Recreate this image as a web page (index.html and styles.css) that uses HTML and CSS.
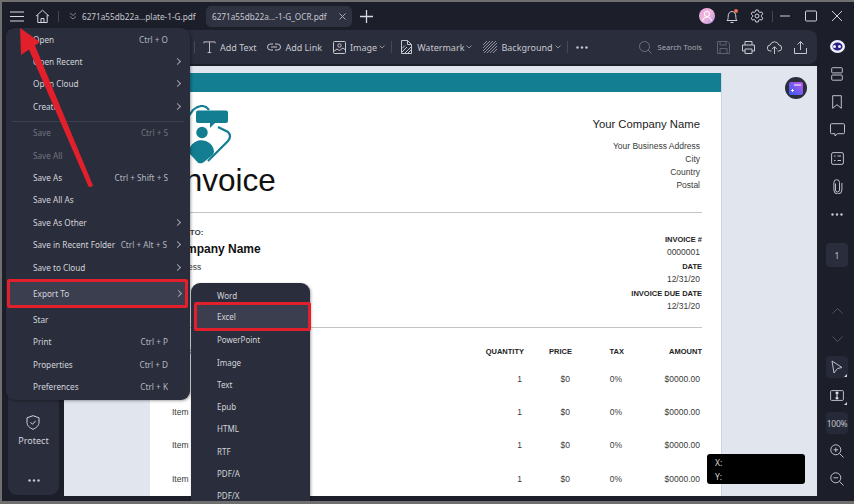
FILE: index.html
```html
<!DOCTYPE html>
<html lang="en">
<head>
<meta charset="utf-8">
<title>Invoice</title>
<link rel="stylesheet" href="styles.css">
</head>
<body>
<div class="window">
  <header class="titlebar">
    <button class="tb-icon burger"><svg width="14" height="11" viewBox="0 0 14 11"><path d="M0 1h14M0 5.500h14M0 10h14"/></svg></button>
    <button class="tb-icon home"><svg width="15" height="15" viewBox="0 0 15 15"><path d="M1 7.200 7.500 1.200 14 7.200M2.800 6v7.500h9.400V6M6 13.500V9.500h3v4"/></svg></button>
    <span class="tb-sep"></span>
    <svg class="tab-chev" width="8" height="8" viewBox="0 0 8 8"><path d="M1 1l3 2.500L7 1M1 4.500 4 7l3-2.500"/></svg>
    <span class="tab">6271a55db22a...plate-1-G.pdf</span>
    <span class="tab active">6271a55db22a...-1-G_OCR.pdf<svg width="7" height="7" viewBox="0 0 7 7"><path d="M.5.500l6 6M6.500.500l-6 6"/></svg></span>
    <svg class="tab-plus" width="13" height="13" viewBox="0 0 13 13"><path d="M6.500 0v13M0 6.500h13"/></svg>
    <div class="tb-right">
      <span class="avatar"><svg width="16" height="16" viewBox="0 0 16 16"><circle cx="8" cy="6" r="2.600"/><path d="M3.500 13c.5-3 2.300-4 4.500-4s4 1 4.500 4"/></svg></span>
      <span class="bell"><svg width="14" height="15" viewBox="0 0 14 15"><path d="M2 11.500c1-1 1.200-2 1.200-4.500C3.200 4.500 4.800 2.500 7 2.500s3.800 2 3.800 4.500c0 2.500.2 3.500 1.200 4.500zM5.500 13.500h3"/></svg><i></i></span>
      <svg class="gear" width="14" height="14" viewBox="0 0 14 14"><path d="M5.800 1h2.400l.4 1.700 1.300.7 1.700-.5 1.200 2-1.300 1.300v1.600l1.300 1.300-1.200 2-1.700-.5-1.300.7L8.200 13H5.800l-.4-1.700-1.300-.7-1.700.5-1.200-2 1.300-1.300V6.200L1.200 4.900l1.200-2 1.700.5 1.300-.7z"/><circle cx="7" cy="7" r="2"/></svg>
      <span class="tb-sep"></span>
      <svg class="win" width="12" height="12" viewBox="0 0 12 12"><path d="M1 6h10"/></svg>
      <svg class="win" width="12" height="12" viewBox="0 0 12 12"><rect x=".5" y="1" width="11" height="10" rx="1"/></svg>
      <svg class="win" width="12" height="12" viewBox="0 0 12 12"><path d="M1 1l10 10M11 1 1 11"/></svg>
    </div>
  </header>

  <div class="main">
    <div class="toolbar">
      <span class="t-sep"></span>
      <span class="tool"><svg width="13" height="14" viewBox="0 0 14 14"><path d="M1 3V1.500h12V3M7 1.500V13M5 13h4"/></svg>Add Text</span>
      <span class="tool"><svg width="14" height="14" viewBox="0 0 14 14"><path d="M6 4H3.500a3 3 0 0 0 0 6H6M8 4h2.500a3 3 0 0 1 0 6H8M4 7h6"/></svg>Add Link</span>
      <span class="tool"><svg width="13" height="13" viewBox="0 0 13 13"><rect x=".5" y=".5" width="12" height="12" rx="1"/><circle cx="6.500" cy="4.500" r="1.700"/><path d="M.5 10.500 4 8l2.500 1.500L10 7l2.500 2"/></svg>Image<svg class="chev" width="6" height="4" viewBox="0 0 6 4"><path d="M.5.500 3 3 5.500.500"/></svg></span>
      <span class="t-sep"></span>
      <span class="tool"><svg width="13" height="14" viewBox="0 0 13 14"><path d="M1.500.5h6l4 4v9h-10zM7.500.5v4h4M2 12 7 7M5 13l6-6M2 8.500 5 5.500M8 13l3-3"/></svg>Watermark<svg class="chev" width="6" height="4" viewBox="0 0 6 4"><path d="M.5.500 3 3 5.500.500"/></svg></span>
      <span class="tool"><svg class="hatch" width="14" height="12" viewBox="0 0 14 12"><path d="M0 4 4 0M0 7l7-7M0 10 10 0M1 12 13 0M4 12l10-10M7 12l7-7M10 12l4-4"/></svg>Background<svg class="chev" width="6" height="4" viewBox="0 0 6 4"><path d="M.5.500 3 3 5.500.500"/></svg></span>
      <span class="t-sep"></span>
      <svg class="dots" width="12" height="3" viewBox="0 0 12 3"><circle cx="1.500" cy="1.500" r="1.200"/><circle cx="6" cy="1.500" r="1.200"/><circle cx="10.500" cy="1.500" r="1.200"/></svg>
      <div class="t-right">
        <span class="search"><svg width="13" height="13" viewBox="0 0 13 13"><circle cx="5.500" cy="5.500" r="5"/><path d="M9 9l3.500 3.500"/></svg>Search Tools</span>
        <svg class="dim" width="13" height="13" viewBox="0 0 13 13"><path d="M.5.500h10l2 2v10H.5zM3 .5v3.500h6V.5M3 12.500V7.500h7v5"/></svg>
        <svg width="13" height="13" viewBox="0 0 13 13"><path d="M3 4V.5h7V4M3 10H.5V4h12v6H10M3 8h7v4.500H3z"/></svg>
        <svg width="15" height="13" viewBox="0 0 15 13"><path d="M4.500 10H3.500a3 3 0 0 1-.3-6 4.500 4.500 0 0 1 8.600 0 3 3 0 0 1-.3 6h-1M7.500 13V6M5 8.200 7.500 5.700 10 8.200"/></svg>
        <svg width="13" height="13" viewBox="0 0 13 13"><path d="M.5 7v5.500h12V7M6.500 9V.8M3.500 3.500l3-3 3 3"/></svg>
      </div>
    </div>

    <aside class="sidebar">
      <div class="side-item">
        <svg width="14" height="15" viewBox="0 0 14 15"><path d="M7 .7 13 2.800v4.500c0 3.400-2.700 5.600-6 7-3.300-1.400-6-3.600-6-7V2.800zM4.500 7.300l2 2 3.200-3.500"/></svg>
        <span>Protect</span>
      </div>
      <svg class="dots side-dots" width="12" height="3" viewBox="0 0 12 3"><circle cx="1.500" cy="1.500" r="1.200"/><circle cx="6" cy="1.500" r="1.200"/><circle cx="10.500" cy="1.500" r="1.200"/></svg>
    </aside>

    <section class="canvas">
      <article class="page">
        <div class="band"></div>
        <div class="head-row">
          <div class="brand">
            <svg class="logo" width="60" height="60" viewBox="0 0 60 60"><path class="logo-line" d="M2 30 20 5Q30-3 36 5M45 22l10 5q4 4 0 9L35 56"/><rect class="logo-fill" x="23" y="5.500" width="32" height="12.500" rx="2"/><path class="logo-fill" d="M37 18h5l-5 5z"/><circle class="logo-fill" cx="29" cy="27.500" r="5.700"/><path class="logo-fill" d="M16 48a12.500 12 0 0 1 25-1.500q0 2-2 4L30 57.800q-3 1-5 0z"/></svg>
            <div class="invoice-title">Invoice</div>
          </div>
          <div class="company">
            <div class="company-name">Your Company Name</div>
            <div class="line">Your Business Address</div>
            <div class="line">City</div>
            <div class="line">Country</div>
            <div class="line">Postal</div>
          </div>
        </div>
        <div class="bill-row">
          <div class="bill-to">
            <div class="bill-label">BILL TO:</div>
            <div class="bill-name">Company Name</div>
            <div class="bill-addr">Address</div>
          </div>
          <div class="meta">
            <div class="meta-k">INVOICE #</div>
            <div class="meta-v">0000001</div>
            <div class="meta-k">DATE</div>
            <div class="meta-v">12/31/20</div>
            <div class="meta-k">INVOICE DUE DATE</div>
            <div class="meta-v">12/31/20</div>
          </div>
        </div>
        <div class="items">
          <div class="th th-first">DESCRIPTION</div><div class="th">QUANTITY</div><div class="th">PRICE</div><div class="th">TAX</div><div class="th">AMOUNT</div>
          <div class="td-item">Item</div><div class="td">1</div><div class="td">$0</div><div class="td">0%</div><div class="td">$0000.00</div>
          <div class="td-item">Item</div><div class="td">1</div><div class="td">$0</div><div class="td">0%</div><div class="td">$0000.00</div>
          <div class="td-item">Item</div><div class="td">1</div><div class="td">$0</div><div class="td">0%</div><div class="td">$0000.00</div>
          <div class="td-item">Item</div><div class="td">1</div><div class="td">$0</div><div class="td">0%</div><div class="td">$0000.00</div>
        </div>
      </article>
      <span class="float-btn"><svg width="14" height="13" viewBox="0 0 14 13"><defs><linearGradient id="fg" x1="1" y1="0" x2="0" y2="1"><stop offset="0" stop-color="#c257e8"/><stop offset="1" stop-color="#2f5cf5"/></linearGradient></defs><rect width="14" height="13" rx="2" fill="url(#fg)"/><path d="M5 3h7" stroke="#f3e8ff" stroke-width="1.200"/><path d="M2 8.500h3M3.500 7v3" stroke="#fff" stroke-width=".9"/></svg></span>
      <div class="coords"><span>X:</span><span>Y:</span></div>
    </section>

    <nav class="rail">
      <span class="r-item"><span class="ai"><i></i><i></i></span></span>
      <span class="r-item"><svg width="12" height="14" viewBox="0 0 12 14"><rect x=".7" y=".7" width="10.600" height="5.200" rx=".8"/><rect x=".7" y="8" width="10.600" height="5.200" rx=".8"/></svg></span>
      <span class="r-item"><svg width="10" height="14" viewBox="0 0 10 14"><path d="M.7.700h8.600v12.600L5 9.700.7 13.300z"/></svg></span>
      <span class="r-item"><svg width="15" height="14" viewBox="0 0 15 14"><path d="M1.500.7h12a1 1 0 0 1 1 1v8a1 1 0 0 1-1 1H7.500L5 13v-2.300H1.500a1 1 0 0 1-1-1v-8a1 1 0 0 1 1-1z"/></svg></span>
      <span class="r-item"><svg width="13" height="13" viewBox="0 0 13 13"><rect x=".6" y=".6" width="11.800" height="11.800" rx="1.500"/><path d="M3 4h1.500M6.500 4H10M3 8.500h1.500M6.500 8.500H10"/></svg></span>
      <span class="r-item"><svg width="11" height="15" viewBox="0 0 11 15"><path d="M3.500 4.500v6.500a2 2 0 0 0 4 0V3.500a2.800 2.800 0 0 0-5.600 0V11a4 4 0 0 0 8 0V4"/></svg></span>
      <span class="r-item"><svg class="dots" width="12" height="3" viewBox="0 0 12 3"><circle cx="1.500" cy="1.500" r="1.200"/><circle cx="6" cy="1.500" r="1.200"/><circle cx="10.500" cy="1.500" r="1.200"/></svg></span>
      <span class="r-page">1</span>
      <span class="r-item r-first dim"><svg width="11" height="6" viewBox="0 0 11 6"><path d="M.5 5.500 5.500.5l5 5"/></svg></span>
      <span class="r-item dim"><svg width="11" height="6" viewBox="0 0 11 6"><path d="M.5.500l5 5 5-5"/></svg></span>
      <span class="r-item boxed"><svg width="12" height="14" viewBox="0 0 12 14"><path d="M1 1 11 7.500 6.500 8.500 3 13z"/></svg><i class="corner"></i></span>
      <span class="r-item"><svg width="14" height="11" viewBox="0 0 14 11"><rect x=".6" y=".6" width="12.800" height="9.800" rx="1"/><path class="thick" d="M7 2v7M5.500 3.300 7 2l1.500 1.300M5.500 7.700 7 9l1.500-1.300"/></svg><i class="corner"></i></span>
      <span class="r-item boxed pct">100%</span>
      <span class="r-item"><svg width="14" height="14" viewBox="0 0 14 14"><circle cx="5.800" cy="5.800" r="5"/><path d="M9.500 9.500l4 4M3.500 5.800h4.600M5.800 3.500v4.600"/></svg></span>
      <span class="r-item"><svg width="14" height="14" viewBox="0 0 14 14"><circle cx="5.800" cy="5.800" r="5"/><path d="M9.500 9.500l4 4M3.500 5.800h4.600"/></svg></span>
    </nav>
  </div>

  <div class="menu">
    <div class="m-item"><span>Open</span><em>Ctrl + O</em></div>
    <div class="m-item"><span>Open Recent</span><b></b></div>
    <div class="m-item"><span>Open Cloud</span><b></b></div>
    <div class="m-item"><span>Create</span><b></b></div>
    <hr class="m-div">
    <div class="m-item off"><span>Save</span><em>Ctrl + S</em></div>
    <div class="m-item off"><span>Save All</span></div>
    <div class="m-item"><span>Save As</span><em>Ctrl + Shift + S</em></div>
    <div class="m-item"><span>Save All As</span></div>
    <div class="m-item"><span>Save As Other</span><b></b></div>
    <div class="m-item"><span>Save in Recent Folder</span><em>Ctrl + Alt + S</em><b></b></div>
    <div class="m-item"><span>Save to Cloud</span><b></b></div>
    <div class="m-item export"><span>Export To</span><b></b></div>
    <div class="m-item"><span>Star</span></div>
    <div class="m-item"><span>Print</span><em>Ctrl + P</em></div>
    <div class="m-item"><span>Properties</span><em>Ctrl + D</em></div>
    <div class="m-item"><span>Preferences</span><em>Ctrl + K</em></div>
  </div>

  <div class="submenu">
    <div class="s-item">Word</div>
    <div class="s-item excel">Excel</div>
    <div class="s-item">PowerPoint</div>
    <div class="s-item">Image</div>
    <div class="s-item">Text</div>
    <div class="s-item">Epub</div>
    <div class="s-item">HTML</div>
    <div class="s-item">RTF</div>
    <div class="s-item">PDF/A</div>
    <div class="s-item">PDF/X</div>
  </div>

  <svg class="arrow" width="100" height="195" viewBox="0 0 100 195"><path d="M20 28 21 55 29 49.500 88.500 186.500Q91 188 93 185.500L35 45.500 40 42z"/></svg>
</div>
</body>
</html>
```
FILE: styles.css
```css
* { box-sizing: border-box; }
html, body { margin: 0; padding: 0; }
body { width: 854px; height: 504px; overflow: hidden; font-family: "Noto Sans", sans-serif; }
svg { display: block; flex: none; fill: none; stroke: currentColor; stroke-width: 1; }
i, em, b { font-style: normal; font-weight: normal; }

.window { position: relative; width: 854px; height: 504px; overflow: hidden; display: flex; flex-direction: column; background: #1c1e2a; border: solid #6f6f6f; border-width: 2px 0 3px 2px; color: #d3d5dc; }

/* title bar */
.titlebar { height: 28px; flex: none; display: flex; align-items: center; font-size: 8.200px; color: #c6c8d0; }
.tb-icon { padding: 0; border: 0; background: none; color: #d7d9e0; display: flex; }
.burger { margin-left: 8px; margin-top: 1px; }
.home { margin-left: 11px; margin-top: 1px; }
.tb-sep { width: 1px; height: 11px; background: #43465a; }
.titlebar > .tb-sep { margin-left: 8px; }
.tab-chev { margin-left: 10px; color: #7d8090; }
.tab { margin-left: 5px; width: 124px; white-space: nowrap; }
.tab.active { margin-left: 0; width: 146px; height: 21px; padding: 0 6px; background: #2f3240; border-radius: 5px; display: flex; align-items: center; justify-content: space-between; }
.tab.active svg { color: #a9abb5; }
.tab-plus { margin-left: 8px; color: #d7d9e0; stroke-width: 1.300; }
.tb-right { margin-left: auto; padding-right: 11px; display: flex; align-items: center; }
.avatar { width: 16px; height: 16px; border-radius: 50%; background: linear-gradient(135deg, #e9a1e4, #f1b7d9 50%, #b58ff0); color: #fff; }
.bell { position: relative; margin-left: 10px; color: #d0d2d9; }
.bell i { position: absolute; top: 0; right: 1px; width: 4px; height: 4px; border-radius: 50%; background: #f26a55; }
.gear { margin-left: 11px; color: #d0d2d9; }
.tb-right .tb-sep { margin-left: 8px; }
.win { margin-left: 14px; color: #cfd1d8; }
.tb-right .tb-sep + .win { margin-left: 6px; }

/* main grid */
.main { flex: 1; min-height: 0; display: grid; grid-template-columns: 62px 753px 37px; grid-template-rows: 34px 430px; row-gap: 2px; }
.toolbar { grid-column: 1 / 3; grid-row: 1; margin-left: 6px; padding: 0 10px 0 191px; background: #2a2d3b; border-radius: 0 8px 8px 0; display: flex; align-items: center; gap: 11px; font-size: 9px; color: #c6c8d0; white-space: nowrap; }
.tool { display: flex; align-items: center; gap: 4px; }
.chev { margin-left: -2px; color: #8b8d99; }
.t-sep { width: 1px; height: 12px; background: #454859; margin: 0 -3px 0 -5px; }
.dots { fill: currentColor; stroke: none; color: #c6c8d0; }
.hatch { stroke-width: .8; color: #a9abb5; }
.t-right { margin-left: auto; display: flex; align-items: center; gap: 12px; }
.search { display: flex; align-items: center; gap: 6px; margin-right: 3px; font-size: 7.600px; color: #a9abb5; }
.search svg { color: #6d7080; }
.dim { color: #5d6070; }

.sidebar { grid-column: 1; grid-row: 2; margin: 0 5px 1px 6px; background: #2a2d3b; border-radius: 0 0 9px 9px; display: flex; flex-direction: column; align-items: center; justify-content: flex-end; padding-bottom: 13px; color: #d3d5dc; font-size: 9px; }
.side-item { display: flex; flex-direction: column; align-items: center; gap: 4px; }
.side-dots { margin-top: 32px; }

/* document */
.canvas { grid-column: 2; grid-row: 2; position: relative; overflow: hidden; background: #e1e5ee; padding: 7px 0 0 86px; }
.page { width: 572px; height: 600px; background: #fff; border-right: 1px solid #ccd6de; padding: 0 19px 0 20px; font-family: "Liberation Sans", Arial, sans-serif; color: #3a3a3a; position: relative; }
.band { height: 19px; margin: 0 -19px 0 -20px; background: #137d92; }
.head-row { height: 121px; display: flex; justify-content: space-between; border-bottom: 1px solid #c4c4c4; }
.brand { padding-top: 13px; }
.logo { margin-left: 3px; }
.logo-line { stroke: #137d92; stroke-width: 2.200; }
.logo-fill { fill: #137d92; stroke: none; }
.invoice-title { margin-top: -3px; padding-left: 6px; font-size: 31.500px; line-height: 36px; color: #111; }
.company { padding-top: 24px; text-align: right; padding-right: 2px; font-size: 8.500px; line-height: 13px; }
.company-name { font-size: 11.300px; line-height: 16px; color: #222; margin-bottom: 8px; }
.bill-row { height: 115px; display: flex; justify-content: space-between; border-bottom: 1px solid #c4c4c4; }
.bill-to { padding-top: 14px; font-size: 8px; }
.bill-label { line-height: 12px; font-weight: bold; }
.bill-name { margin-top: 2px; font-size: 12px; line-height: 16px; font-weight: bold; color: #111; }
.bill-addr { margin-top: 4px; font-size: 8.500px; line-height: 12px; }
.meta { padding-top: 19.500px; text-align: right; font-size: 8.500px; line-height: 13.600px; }
.meta-k { font-size: 7.500px; font-weight: bold; color: #222; }
.meta-v { padding-right: 2px; }
.items { display: grid; grid-template-columns: 1fr 48px 48px 52px 78px; grid-template-rows: 22px; grid-auto-rows: 33.200px; font-size: 8.500px; align-items: center; padding-top: 12.500px; }
.th { font-size: 7.500px; font-weight: bold; text-align: right; color: #222; }
.th-first { text-align: left; }
.td { text-align: right; padding-right: 2px; }
.td-item { padding-left: 2px; }

.float-btn { position: absolute; top: 11px; left: 721px; width: 22px; height: 22px; border-radius: 50%; background: #2b2e3c; display: flex; align-items: center; justify-content: center; }
.float-btn svg { stroke: none; }
.coords { position: absolute; top: 388px; left: 643px; width: 98px; height: 30px; padding: 2px 8px; border-radius: 3px; background: #000; color: #d8d8d8; font-size: 8.500px; line-height: 14px; display: flex; flex-direction: column; }

/* right rail */
.rail { grid-column: 3; grid-row: 1 / 3; display: flex; flex-direction: column; align-items: center; padding: 2px 0 0 3px; color: #bfc1ca; font-size: 8.500px; }
.r-item { position: relative; width: 22px; height: 28px; flex: none; display: flex; align-items: center; justify-content: center; }
.ai { width: 15px; height: 13px; border-radius: 50%; background: #2a1f86; box-shadow: inset 0 0 0 2.500px #eef0fb; display: flex; align-items: center; justify-content: center; gap: 2px; }
.ai i { width: 3px; height: 3px; border-radius: 50%; background: #eef0fb; }
.r-page { width: 22px; height: 24px; margin-top: 15px; background: #2a2d3b; border-radius: 4px; display: flex; align-items: center; justify-content: center; flex: none; }
.r-first { margin-top: 30px; }
.r-item.dim { color: #4f5262; }
.boxed { z-index: 0; }
.boxed::before { content: ""; position: absolute; left: 0; right: 0; top: 3px; bottom: 3px; background: #262937; border-radius: 4px; z-index: -1; }
.pct { letter-spacing: -.3px; }
.corner { position: absolute; right: 1px; bottom: 4px; width: 0; height: 0; border-left: 3px solid transparent; border-bottom: 3px solid #d5d7de; }
.thick { stroke-width: 1.100; color: #e6e7ec; }

/* file menu */
.menu { position: absolute; top: 26px; left: 4px; width: 184px; height: 372px; background: #2a2d3b; border-radius: 9px; box-shadow: 1px 1px 3px rgba(0, 0, 0, .35); padding: 0 1px; font-size: 8.200px; }
.m-item { height: 22.400px; display: flex; align-items: center; padding: 0 7px 0 26px; color: #d3d5dc; white-space: nowrap; }
.m-item.off { color: #72747f; }
.m-item em { margin-left: auto; color: #b6b8c1; }
.m-item em:last-child { margin-right: 14px; }
.m-item.off em { color: #72747f; }
.m-item b { width: 15px; flex: none; display: flex; justify-content: flex-end; }
.m-item span + b { margin-left: auto; }
.m-item b::after { content: ""; width: 4px; height: 4px; margin-right: 2px; border: solid #9fa1ab; border-width: 1px 1px 0 0; transform: rotate(45deg); }
.m-div { height: 1px; margin: 3px 5px 0; border: 0; background: #3d404f; }
.m-item.export { height: 29px; margin: .8px 0 0; padding: 0 2px 0 23px; width: 181px; background: #3b3e4e; border: 3px solid #e2202c; border-radius: 2px; }

.submenu { position: absolute; top: 281px; left: 189px; bottom: -6px; width: 119px; background: #2a2d3b; border-radius: 9px 9px 0 0; box-shadow: 1px 1px 3px rgba(0, 0, 0, .35); padding-top: 1px; font-size: 8px; color: #d3d5dc; }
.s-item { height: 22.300px; display: flex; align-items: center; padding-left: 26px; }
.s-item.excel { height: 29px; margin: -4px -1px -2.700px 3px; padding-left: 20px; background: #3b3e4e; border: 3px solid #e2202c; border-radius: 2px; }

.arrow { position: absolute; top: -2px; left: -2px; fill: #e2202c; stroke: none; }
```
